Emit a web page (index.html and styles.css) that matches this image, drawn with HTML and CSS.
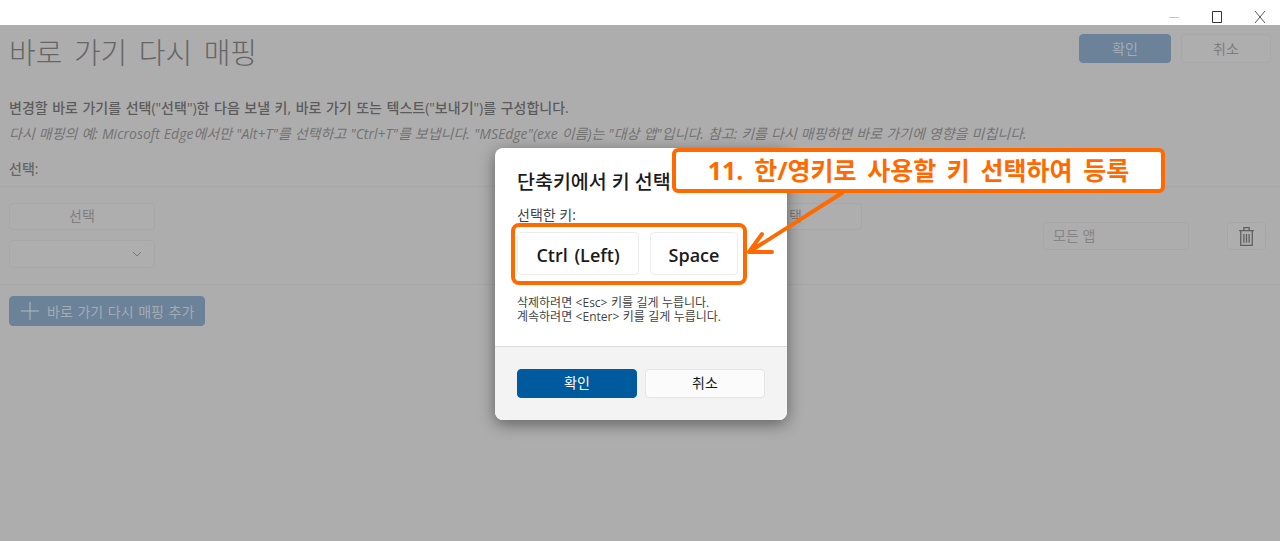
FILE: index.html
```html
<!DOCTYPE html>
<html lang="ko">
  <head>
    <meta charset="UTF-8" />
    <title>바로 가기 다시 매핑</title>
    <link rel="stylesheet" href="styles.css">
  </head>
  <body>
    <div class="titlebar">
      <svg width="12" height="14" viewBox="0 0 12 14"><path d="M1 7.500h10" stroke="#c4c4c4" /></svg>
      <svg width="12" height="14" viewBox="0 0 12 14"><path d="M1.500 1.500h9v11h-9z" fill="none" stroke="#333" /></svg>
      <svg width="12" height="14" viewBox="0 0 12 14"><path d="M1 1l10 12M11 1l-10 12" stroke="#444" stroke-width=".9" /></svg>
    </div>

    <main class="page">
      <header class="page-head">
        <h1>바로 가기 다시 매핑</h1>
        <div class="head-actions">
          <button class="btn primary ok">확인</button>
          <button class="btn cancel">취소</button>
        </div>
      </header>

      <p class="desc">변경할 바로 가기를 선택("선택")한 다음 보낼 키, 바로 가기 또는 텍스트("보내기")를 구성합니다.</p>
      <p class="note">다시 매핑의 예: Microsoft Edge에서만 "Alt+T"를 선택하고 "Ctrl+T"를 보냅니다. "MSEdge"(exe 이름)는 "대상 앱"입니다. 참고: 키를 다시 매핑하면 바로 가기에 영향을 미칩니다.</p>
      <div class="section-label">선택:</div>

      <section class="row">
        <div class="col">
          <button class="btn field">선택</button>
          <div class="btn field combo">
            <svg width="10" height="6" viewBox="0 0 10 6"><path d="M1 1l4 4 4-4" fill="none" stroke="#777" /></svg>
          </div>
        </div>
        <button class="btn field second">선택</button>
        <div class="app-input">모든 앱</div>
        <button class="btn trash">
          <svg width="17" height="21" viewBox="0 0 16 20" fill="none" stroke="#5f5f5f" stroke-width="1.200"><path d="M1 4.500h14M5.500 4V1.500h5V4M2.500 5v13.500h11V5M5.500 7.500v8.500M8 7.500v8.500M10.500 7.500v8.500" /></svg>
        </button>
      </section>

      <button class="btn primary add">
        <svg width="20" height="20" viewBox="0 0 20 20"><path d="M10 1v18M1 10h18" stroke="#b4b9bf" /></svg>
        <span>바로 가기 다시 매핑 추가</span>
      </button>
    </main>

    <div class="overlay">
      <div class="dialog">
        <div class="dialog-body">
          <h2>단축키에서 키 선택</h2>
          <div class="dialog-label">선택한 키:</div>
          <div class="keys">
            <span class="key ctrl">Ctrl (Left)</span>
            <span class="key space">Space</span>
          </div>
          <p class="hint">삭제하려면 &lt;Esc&gt; 키를 길게 누릅니다.<br />계속하려면 &lt;Enter&gt; 키를 길게 누릅니다.</p>
        </div>
        <div class="dialog-foot">
          <button class="btn dlg-ok">확인</button>
          <button class="btn dlg-cancel">취소</button>
        </div>
      </div>
    </div>

    <!-- 주석 표시 -->
    <svg class="arrow" width="1280" height="541" viewBox="0 0 1280 541">
      <path d="M842 193L749 252M749 252L762 234M749 252L772 252" fill="none" stroke="#ff6a00" stroke-width="4" stroke-linecap="round" />
    </svg>
    <div class="mark-keys"></div>
    <div class="callout">11. 한/영키로 사용할 키 선택하여 등록</div>
  </body>
</html>
```

FILE: styles.css
```css
* {
  margin: 0;
  padding: 0;
  box-sizing: border-box;
}

body {
  position: relative;
  height: 541px;
  overflow: hidden;
  background: #adadad;
  font-family: "Open Sans", "Noto Sans CJK KR", sans-serif;
  color: #5a5a5a;
}

button {
  font-family: inherit;
}

.titlebar {
  height: 25px;
  background: #fff;
  display: flex;
  justify-content: flex-end;
  align-items: flex-start;
  gap: 31px;
  padding: 10px 14px 0 0;
}

.page {
  padding: 0 9px;
}

.page-head {
  display: flex;
  justify-content: space-between;
  height: 56px;
}

h1 {
  font-size: 29px;
  font-weight: 300;
  line-height: 40px;
  margin-top: 8px;
  color: #666;
  word-spacing: 4px;
}

.head-actions {
  display: flex;
  gap: 10px;
  margin-top: 9px;
}

.btn {
  border: 1px solid #a7a7a7;
  border-radius: 4px;
  background: #aeaeae;
  color: #7e7e7e;
  font-size: 14px;
  height: 29px;
  padding-bottom: 2px;
}

.primary {
  background: #6c8299;
  border-color: #6c8299;
  color: #a4abb3;
}

.ok {
  width: 92px;
}

.cancel {
  width: 90px;
}

.desc {
  font-size: 14px;
  font-weight: 500;
  line-height: 20px;
  margin-top: 17px;
  color: #5c5c5c;
  word-spacing: 0.900px;
}

.note {
  font-size: 14px;
  font-style: italic;
  line-height: 20px;
  margin-top: 6px;
  color: #737373;
  word-spacing: 0.400px;
}

.section-label {
  font-size: 14px;
  font-weight: 500;
  line-height: 20px;
  margin-top: 15px;
  color: #666;
}

.row {
  display: flex;
  height: 99px;
  margin: 7px -9px 0;
  padding: 16px 0 0 9px;
  border-top: 1px solid #a7a7a7;
  border-bottom: 1px solid #a7a7a7;
}

.col {
  display: flex;
  flex-direction: column;
  gap: 10px;
  width: 146px;
}

.field {
  width: 146px;
  height: 27px;
  padding-bottom: 4px;
}

.combo {
  height: 28px;
  display: flex;
  justify-content: flex-end;
  align-items: center;
  padding: 0 12px 0 0;
}

.second {
  margin-left: 561px;
}

.app-input {
  width: 146px;
  height: 28px;
  margin-left: 181px;
  margin-top: 19px;
  padding-left: 9px;
  border: 1px solid #a7a7a7;
  border-radius: 4px;
  font-size: 14px;
  line-height: 25px;
  color: #858585;
}

.trash {
  width: 39px;
  height: 28px;
  margin-left: 38px;
  margin-top: 19px;
  padding: 0;
  display: flex;
  justify-content: center;
  align-items: center;
}

.add {
  display: flex;
  align-items: center;
  gap: 7px;
  width: 196px;
  height: 30px;
  margin-top: 11px;
  padding: 0 0 0 10px;
  white-space: nowrap;
  word-spacing: 1px;
}

.overlay {
  position: absolute;
  top: 25px;
  left: 0;
  right: 0;
  bottom: 0;
  display: flex;
  justify-content: center;
  align-items: center;
  padding-left: 2px;
  padding-top: 1px;
}

.dialog {
  width: 292px;
  height: 272px;
  background: #fff;
  border-radius: 8px;
  box-shadow: 0 4px 16px rgba(0, 0, 0, 0.45);
  overflow: hidden;
  display: flex;
  flex-direction: column;
  color: #1b1b1b;
}

.dialog-body {
  height: 199px;
  padding: 21px 22px 0;
  border-bottom: 1px solid #dcdcdc;
}

h2 {
  font-size: 19.500px;
  font-weight: 500;
  line-height: 26px;
}

.dialog-label {
  font-size: 14px;
  line-height: 18px;
  margin-top: 11px;
  color: #444;
}

.keys {
  display: flex;
  gap: 11px;
  margin-top: 8px;
}

.key {
  height: 43px;
  background: #fff;
  border: 1px solid #ececec;
  border-radius: 4px;
  font-size: 18px;
  font-weight: 600;
  line-height: 45px;
  text-align: center;
}

.ctrl {
  width: 122px;
  word-spacing: 2px;
}

.space {
  width: 88px;
}

.hint {
  font-size: 12px;
  line-height: 14px;
  margin-top: 21px;
  color: #444;
  word-spacing: 0.300px;
}

.dialog-foot {
  flex: 1;
  background: #f3f3f3;
  display: flex;
  gap: 8px;
  padding: 22px 22px 0;
}

.dlg-ok,
.dlg-cancel {
  width: 120px;
  height: 29px;
}

.dlg-ok {
  background: #005a9e;
  border-color: #005a9e;
  color: #fff;
}

.dlg-cancel {
  background: #fbfbfb;
  border-color: #e5e5e5;
  color: #1b1b1b;
}

.arrow {
  position: absolute;
  top: 0;
  left: 0;
}

.mark-keys {
  position: absolute;
  left: 511px;
  top: 223px;
  width: 236px;
  height: 62px;
  border: 4px solid #ff6a00;
  border-radius: 8px;
}

.callout {
  position: absolute;
  left: 672px;
  top: 148px;
  width: 493px;
  height: 45px;
  background: #fff;
  border: 4px solid #ff6a00;
  border-radius: 6px;
  color: #ff6a00;
  font-size: 25px;
  font-weight: 700;
  line-height: 37px;
  text-align: center;
  word-spacing: 4.200px;
}
```
